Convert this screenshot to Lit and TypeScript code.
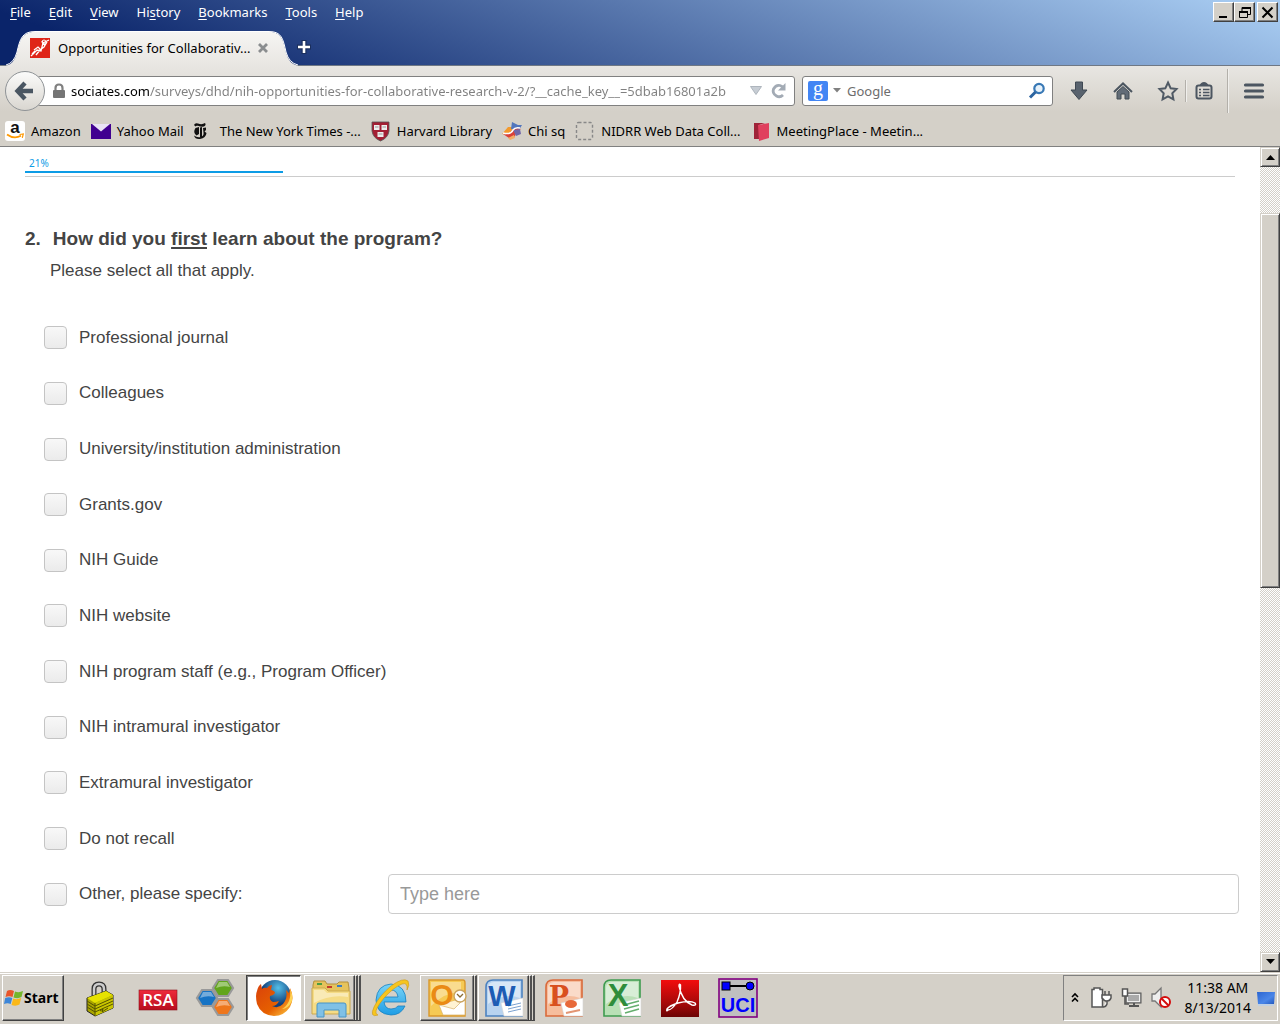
import { LitElement, html, css, svg } from "lit";
import { customElement, property } from "lit/decorators.js";

/* Icons of the bookmarks toolbar, all on a 20 x 20 grid */
const bookmarkIcons: Record<string, unknown> = {
  amazon: svg`<rect width="20" height="20" rx="3" fill="#fff"/>
    <text x="10" y="12" text-anchor="middle" font-family="Liberation Sans, sans-serif" font-weight="bold" font-size="17" fill="#111">a</text>
    <path d="M2 13.500Q9 18.500 16 14.800" fill="none" stroke="#f90" stroke-width="1.800"/><path d="M14.500 13.500L18.300 13L17.300 16.800" fill="none" stroke="#f90" stroke-width="1.200"/>`,
  yahoo: svg`<rect y="3" width="20" height="15" fill="#400090"/><path d="M1 3H19L10 10.500z" fill="#e9e2f5"/>`,
  times: svg`<path d="M3 4Q4 1.500 7 2.500Q11 4 14 2Q15.500 4 13 5.500Q10 6 7 4.800Q5 4.300 4.500 5.500zM4.500 7L8 6V13L5.500 14.500Q2.500 12 3.500 9zM9 6.500L11 6V17L9 16zM12 7L15 6.500V9L13.500 10.500L15.500 12Q15 17 9 18Q4 18.500 3 14.500Q7 17.500 10.500 15.500Q13 14.500 12.500 11.500z" fill="#111" transform="translate(-3 0)"/>`,
  harvard: svg`<path d="M1 1H18V10Q17 17 9.500 20Q2 17 1 10z" fill="#a31f34" stroke="#555" stroke-width=".8"/><path d="M3 4h5.500v5H3zM10.500 4H16v5h-5.500zM6.500 11h6v5h-6z" fill="#eee"/><path d="M4 6h3.500M11.500 6H15M7.500 13h4" stroke="#999"/>`,
  chi: svg`<path d="M0 13L6 6L12 6L8 14z" fill="#f39a2d"/><path d="M10 1L16 4L20 4L17 9L9 8z" fill="#5276bd"/><path d="M1 13Q8 14 10 9Q13 6 19 8Q14 10 13 15Q11 18 7 17z" fill="#d9413a"/><path d="M11 9L18 8L19 13L14 15z" fill="#7168a9"/><path d="M1 12Q9 14 11 9Q13 6 18 7" fill="none" stroke="#fff" stroke-width="1.500"/><path d="M6 17L12 14L13 17L8 19z" fill="#f4ad66"/>`,
  blank: svg`<rect x="1.500" y="1.500" width="16" height="17" rx="2" fill="none" stroke="#888" stroke-width="1.400" stroke-dasharray="3 2"/>`,
  meeting: svg`<path d="M3 2H14L8 4V18H3z" fill="#9f2338"/><path d="M7 4L18 2V17L8 20z" fill="#e0405e"/>`,
};

/* Shared page-and-frame backdrop of the office icons */
const sheet = (edge: string, pale: string) => svg`
  <path d="M2 9Q2 2 9 2H38V38H2z" fill="${pale}" stroke="${edge}" stroke-width="1.600"/>
  <path d="M4 10Q4 4 10 4H36V20Q20 14 4 26z" fill="#fff" opacity=".45"/>
  <path d="M17 25L39 20V38H20z" fill="#fff" stroke="#d5d5d5" stroke-width=".6"/>`;

/* Icons of the programs pinned to the taskbar, on a 40 x 40 grid */
const taskIcons: Record<string, unknown> = {
  lock: svg`<path d="M14 18V11Q14 6 19 6Q24 6 24 11V17" fill="none" stroke="#333" stroke-width="5"/><path d="M14 18V11Q14 6 19 6Q24 6 24 11V17" fill="none" stroke="#ccc" stroke-width="2.400"/>
    <path d="M7 20L26 13L33 17V30L15 38L7 33z" fill="#a9a400" stroke="#222"/><path d="M7 20L26 13L33 17L15 25z" fill="#e6e200"/><path d="M15 25L33 17V30L15 38z" fill="#c9c500"/><path d="M15 25V38M15 28L33 20M15 31L33 23M15 34L33 26M7 23L15 28M7 26L15 31M7 29L15 34M20 33L23 31L22 34L28 30" stroke="#555200" fill="none"/>`,
  rsa: svg`<defs><linearGradient id="r" x2="0" y2="1"><stop stop-color="#ee2a3b"/><stop offset="1" stop-color="#b80c1e"/></linearGradient></defs><rect x="1" y="12" width="38" height="20" fill="url(#r)" stroke="#8d1420" stroke-width=".6"/>
    <text x="20" y="28" text-anchor="middle" font-family="Open Sans, sans-serif" font-weight="600" font-size="17" fill="#fff">RSA</text>`,
  hex: svg`<g stroke="#999" stroke-width="2.200"><path d="M22 2H32L37 10L32 18H22L17 10z" fill="#62a51c"/><path d="M6 12H16L21 20L16 28H6L1 20z" fill="#1673c4"/><path d="M22 21H32L37 29L32 37H22L17 29z" fill="#ee761c"/></g>
    <path d="M23 4H31L34 9Q27 7 20 10zM7 14H15L18 19Q11 17 4 20zM23 23H31L34 28Q27 26 20 29z" fill="#fff" opacity=".4"/>`,
  firefox: svg`<defs><radialGradient id="fb" cx=".6" cy=".25"><stop stop-color="#54bfe8"/><stop offset="1" stop-color="#123f7b"/></radialGradient><linearGradient id="fo" x2="1" y2="1"><stop stop-color="#d9410b"/><stop offset=".6" stop-color="#e66000"/><stop offset="1" stop-color="#ffd24a"/></linearGradient></defs>
    <circle cx="21" cy="18" r="16" fill="url(#fb)"/><path d="M3 13Q4 8 7 6L8 11Q10 9 13 10Q15 7 18 7L17 12Q21 13 21 15Q19 18 16 18Q15 22 19 24Q22 24 25 23Q23 28 18 28Q24 31 29 26Q34 20 32 12L35 15L36 10Q41 20 36 29Q30 38 20 38Q7 37 3 26Q1 17 3 13z" fill="url(#fo)"/><path d="M36 11Q38 25 28 31Q34 31 38 23Q39 16 36 11z" fill="#ffd454"/>`,
  explorer: svg`<path d="M3 7L4 3H15L17 6H27L29 4H38L39 10V35H3z" fill="#e6c35c" stroke="#b4903b"/><path d="M7 5H12V7H7z" fill="#4a9c42"/><path d="M17 8H22V10H17z" fill="#c43c2c"/><path d="M27 7H32V9H27z" fill="#397bc2"/><path d="M2 10H15L18 13H40V36H2z" fill="#f5dc86" stroke="#cba94e"/><path d="M4 12H14L17 15H38V19Q20 16 4 25z" fill="#fff" opacity=".4"/><path d="M7 39V27Q7 25 9 25H34Q36 25 36 27V39H29V32H14V39z" fill="#7fc0e6" stroke="#4994c5"/>`,
  ie: svg`<defs><linearGradient id="ie" x2="0" y2="1"><stop stop-color="#7ad4f7"/><stop offset="1" stop-color="#1e9de5"/></linearGradient></defs><path d="M36 24H14Q15 31 21 31Q26 31 28 28H35Q31 37 21 37Q6 36 6 22Q7 7 21 6Q36 7 36 24zM14 19H28Q27 12 21 12Q15 12 14 19z" fill="url(#ie)" stroke="#1780c0" stroke-width=".8"/><path d="M8 37Q-1 40 4 29Q9 18 21 8Q33-1 38 3Q40 7 37 12Q38 4 32 6Q24 9 14 20Q5 31 6 35Q6 36 8 37z" fill="#f7c51e" stroke="#c9981b" stroke-width=".6"/>`,
  outlook: svg`<path d="M2 2H36Q38 2 38 5V38H2z" fill="#f6ca55" stroke="#d9982b" stroke-width="1.400"/><path d="M4 4H34V14Q18 14 4 28z" fill="#fff" opacity=".35"/><path d="M12 27L38 20V37H16z" fill="#fff" stroke="#d9b26a" stroke-width=".7"/><path d="M12 27L27 31L38 20" fill="#fff3d3" stroke="#d9b26a" stroke-width=".7"/><text x="15" y="27" text-anchor="middle" font-family="Liberation Sans, sans-serif" font-weight="bold" font-size="30" fill="#ea8b15">O</text><circle cx="33" cy="18" r="6" fill="#fff" stroke="#c9a35f" stroke-width="1.400"/><path d="M30 16L33 19L36 16" fill="none" stroke="#8a6a32" stroke-width="1.300"/>`,
  word: svg`${sheet("#4c82c0", "#b8d3ef")}<path d="M24 28L37 25M24 31L37 28M24 34L37 31" stroke="#7ca2cf"/><text x="18" y="28" text-anchor="middle" font-family="Liberation Sans, sans-serif" font-weight="bold" font-size="29" fill="#1d5cb4">W</text>`,
  ppt: svg`${sheet("#d9693a", "#f6bd9d")}<ellipse cx="27" cy="26" rx="6" ry="4" fill="#e8693a"/><path d="M22 35L36 32" stroke="#e39573" stroke-width="2"/><text x="15" y="28" text-anchor="middle" font-family="DejaVu Serif, serif" font-weight="bold" font-size="27" fill="#d9501e">P</text>`,
  excel: svg`${sheet("#3e9b4f", "#b9e0b6")}<path d="M22 27L37 23M22 31L37 27M23 35L37 31" stroke="#65ae6e" stroke-width="1.600"/><text x="16" y="28" text-anchor="middle" font-family="Liberation Sans, sans-serif" font-weight="bold" font-size="31" fill="#2f8d3b">X</text>`,
  acrobat: svg`<defs><linearGradient id="ac" x2="0" y2="1"><stop stop-color="#f20d0d"/><stop offset=".7" stop-color="#9c0808"/><stop offset="1" stop-color="#6a0404"/></linearGradient></defs><rect x="1" y="2" width="38" height="37" fill="url(#ac)"/><path d="M8 32Q6 34 7 31Q9 28 18 25Q30 22 35 25Q37 28 32 27Q22 23 19 8Q19 5 20.500 7Q21 15 17 24Q12 32 8 32z" fill="none" stroke="#fff" stroke-width="1.400"/>`,
  uci: svg`<rect x="1" y="1" width="38" height="38" fill="#c0c0c0" stroke="#800080" stroke-width="1.600"/><path d="M8 8H32" stroke="#000" stroke-width="2"/><rect x="4" y="4" width="8" height="8" fill="#00f" stroke="#000"/><circle cx="32" cy="8" r="4" fill="#00f" stroke="#000"/><text x="20" y="34" text-anchor="middle" font-family="Liberation Sans, sans-serif" font-weight="bold" font-size="20" fill="#00f">UCI</text>`,
};

@customElement("browser-chrome")
class BrowserChrome extends LitElement {
  static styles = css`
    :host { display: block; font: 13px/18px Tahoma, "Noto Sans", sans-serif; color: #000; }
    button { font: inherit; color: inherit; background: none; border: 0; padding: 0; }
    svg { display: block; flex: none; overflow: visible; }
    .title { background: linear-gradient(20deg, #0a246a 10%, #a6caf0 97%); border-bottom: 1px solid #6f7884; }
    .menubar { display: flex; justify-content: space-between; padding: 2px 2px 0 10px; height: 28px; box-sizing: border-box; }
    .menus { display: flex; gap: 18px; color: #fff; height: 20px; }
    .menus u { text-underline-offset: 2px; }
    .window { display: flex; }
    .win { width: 21px; height: 20px; background: #d4d0c8; border: 1px solid; border-color: #fff #404040 #404040 #fff; box-shadow: inset -1px -1px #808080; display: grid; place-items: center; }
    .win.close { margin-left: 2px; }
    .tabs { display: flex; align-items: center; height: 37px; padding-left: 6px; }
    .tab { position: relative; display: flex; align-items: center; width: 291px; height: 37px; box-sizing: border-box; padding: 3px 0 0 24px; }
    .tab-shape { position: absolute; left: 0; bottom: -1px; }
    .favicon, .tab-name, .tab-close { position: relative; }
    .tab-name { width: 196px; margin: 0 4px 0 8px; overflow: hidden; white-space: nowrap; text-overflow: ellipsis; }
    .tools { background: linear-gradient(#e8e6e2, #d4d0c8 46px); border-bottom: 1px solid #808080; }
    .nav { display: flex; align-items: center; height: 49px; padding: 0 15px 0 5px; }
    .back { position: relative; width: 40px; height: 40px; box-sizing: border-box; border: 1px solid #8f9396; border-radius: 50%; background: linear-gradient(#fbfbfa, #d9d6d0); display: grid; place-items: center; margin-right: -8px; flex: none; }
    .field { display: flex; align-items: center; height: 30px; box-sizing: border-box; border: 1px solid #808080; border-radius: 3px; background: #fff; min-width: 0; }
    .field input { flex: 1; min-width: 0; border: 0; padding: 0; outline: 0; font: inherit; height: 24px; background: none; }
    .url { flex: 1 1 0; padding: 0 6px 0 14px; gap: 5px; }
    .field .address { background: linear-gradient(90deg, #000 78px, #808080 78px); -webkit-background-clip: text; background-clip: text; color: transparent; }
    .address-end { display: flex; align-items: center; gap: 8px; margin-left: 3px; }
    .search { flex: 0 1 251px; margin-left: 7px; padding: 0 6px 0 5px; }
    .search input { margin-left: 6px; }
    .search input::placeholder { color: #6d6d6d; opacity: 1; }
    .engine { display: flex; align-items: center; gap: 5px; }
    .actions { display: flex; align-items: center; gap: 22px; margin-left: 15px; height: 45px; }
    .pair { display: flex; align-items: center; gap: 7px; }
    .divider { width: 1px; height: 22px; background: #b3b0aa; border-right: 1px solid #f0efec; }
    .tall { height: 44px; margin: 0 -8px 0 -9px; }
    .bookmarks { display: flex; gap: 10px; height: 31px; padding-left: 5px; align-items: center; }
    .bookmark { display: flex; align-items: center; gap: 6px; color: inherit; text-decoration: none; white-space: nowrap; }
  `;

  private menus = [["", "F", "ile"], ["", "E", "dit"], ["", "V", "iew"], ["Hi", "s", "tory"], ["", "B", "ookmarks"], ["", "T", "ools"], ["", "H", "elp"]];
  private bookmarks = [
    ["amazon", "Amazon"], ["yahoo", "Yahoo Mail"], ["times", "The New York Times -..."], ["harvard", "Harvard Library"],
    ["chi", "Chi sq"], ["blank", "NIDRR Web Data Coll..."], ["meeting", "MeetingPlace - Meetin..."],
  ];

  render() {
    return html`
      <header class="title">
        <div class="menubar">
          <nav class="menus">${this.menus.map(([a, key, b]) => html`<button>${a}<u>${key}</u>${b}</button>`)}</nav>
          <div class="window">
            <button class="win" aria-label="Minimize"><svg width="13" height="13"><path d="M2 11h8" stroke="#000" stroke-width="2"/></svg></button>
            <button class="win" aria-label="Restore"><svg width="13" height="13"><path d="M4 5V1.500H12.500V8.500H10M1.500 5.500H9.500V11.500H1.500z" fill="none" stroke="#000"/><path d="M4 2H13M1 6H10" stroke="#000" stroke-width="2"/></svg></button>
            <button class="win close" aria-label="Close"><svg width="13" height="13"><path d="M1.500 1.500L11.500 11.500M11.500 1.500L1.500 11.500" stroke="#000" stroke-width="2"/></svg></button>
          </div>
        </div>
        <div class="tabs">
          <div class="tab">
            <svg class="tab-shape" width="292" height="36"><defs><linearGradient id="t" x2="0" y2="1"><stop stop-color="#f6f5f3"/><stop offset="1" stop-color="#e8e6e2"/></linearGradient></defs><path d="M0 36Q8 34 11 23C14 10 16 2 29 2H263C276 2 277 10 280 23Q283 34 292 36z" fill="url(#t)"/><path d="M0 35Q8 33 11 22C14 9 16 1.500 29 1.500H263C276 1.500 277 9 280 22Q283 33 292 35" fill="none" stroke="#fff"/></svg>
            <svg class="favicon" width="20" height="20"><rect width="20" height="20" fill="#df2518"/><path d="M1 18L7 12L11 13L13 5L19 2M4 12L8 9L11 12M2 16L5 13M6 17L10 12L14 9L17 4M12 3L15 8" fill="none" stroke="#fff" stroke-width="1.300"/><circle cx="14" cy="4" r="2" fill="none" stroke="#fff"/></svg>
            <span class="tab-name">Opportunities for Collaborativ...</span>
            <button class="tab-close" aria-label="Close tab"><svg width="10" height="10"><path d="M1 1L9 9M9 1L1 9" stroke="#8a8d8f" stroke-width="2.800"/></svg></button>
          </div>
          <button aria-label="New tab"><svg width="14" height="14"><path d="M7 0V14M0 7H14" stroke="#1b2f5d" stroke-width="5"/><path d="M7 1V13M1 7H13" stroke="#fff" stroke-width="2.600"/></svg></button>
        </div>
      </header>
      <div class="tools">
        <div class="nav">
          <button class="back" aria-label="Back"><svg width="20" height="20"><path d="M10 2L2.500 10L10 18M3 10H18" fill="none" stroke="#4a5662" stroke-width="4.400"/></svg></button>
          <div class="field url">
            <svg width="14" height="16"><path d="M3.500 8V5Q3.500 1.500 7 1.500Q10.500 1.500 10.500 5V8" fill="none" stroke="#808080" stroke-width="2.200"/><rect x="1" y="7" width="12" height="8" rx="1" fill="#757575"/></svg>
            <input class="address" aria-label="Address" value="sociates.com/surveys/dhd/nih-opportunities-for-collaborative-research-v-2/?__cache_key__=5dbab16801a2b" />
            <div class="address-end">
              <button aria-label="Show history"><svg width="12" height="9"><path d="M.5.5H11.500L6 8.500z" fill="#c7cdd4" stroke="#aeb5bd"/></svg></button>
              <button aria-label="Reload"><svg width="18" height="18"><path d="M13 13Q10 16 6.500 14Q2 11.500 3.500 7Q6 2.500 10 3.500Q12 4 13.500 6" fill="none" stroke="#a3abb5" stroke-width="2.800"/><path d="M15.500 1V8.500H8z" fill="#a3abb5"/></svg></button>
            </div>
          </div>
          <div class="field search">
            <button class="engine" aria-label="Search engine">
              <svg width="20" height="20"><rect width="20" height="20" rx="2" fill="#4285f4"/><text x="10" y="14" text-anchor="middle" font-family="Liberation Serif, serif" font-size="20" fill="#fff">g</text></svg>
              <svg width="8" height="5"><path d="M0 0H8L4 4.500z" fill="#808080"/></svg>
            </button>
            <input aria-label="Search" placeholder="Google" />
            <button aria-label="Go"><svg width="18" height="18"><circle cx="11" cy="6.500" r="4.700" fill="#e7f2fb" stroke="#3878b5" stroke-width="2.200"/><path d="M7.500 10L2 15.500" stroke="#2c64a0" stroke-width="3"/></svg></button>
          </div>
          <div class="actions">
            <button aria-label="Downloads"><svg width="22" height="20"><path d="M7.500 1H14.500V9H19L11 18.500L3 9H7.500z" fill="#59636e" stroke="#3f4852"/></svg></button>
            <button aria-label="Home"><svg width="22" height="20"><path d="M2 11L11 2.500L20 11" fill="none" stroke="#4b555f" stroke-width="2"/><path d="M5 11L11 5.500L17 11V18H13V13H9V18H5z" fill="#626c77" stroke="#434c55"/></svg></button>
            <div class="pair">
              <button aria-label="Bookmark this page"><svg width="22" height="20"><path d="M12 1.500L14.700 7.300L20.500 8L16.300 12.300L17.400 18.300L12 15.300L6.600 18.300L7.700 12.300L3.500 8L9.300 7.300z" fill="none" stroke="#505a65" stroke-width="2"/></svg></button>
              <span class="divider"></span>
              <button aria-label="Show bookmarks"><svg width="20" height="20"><rect x="2.500" y="4.500" width="15" height="13" rx="2" fill="none" stroke="#4c5661" stroke-width="2"/><path d="M5 5Q7 1 10 1Q13 1 15 5z" fill="#4c5661"/><path d="M5 8.500H7M9 8.500H15.500M5 11.500H7M9 11.500H15.500M5 14.500H7M9 14.500H15.500" stroke="#4c5661" stroke-width="1.400"/></svg></button>
            </div>
            <span class="divider tall"></span>
            <button aria-label="Menu"><svg width="22" height="20"><path d="M2.500 4H19.500M2.500 10H19.500M2.500 16H19.500" stroke="#4c5661" stroke-width="3.200" stroke-linecap="round"/></svg></button>
          </div>
        </div>
        <nav class="bookmarks">
          ${this.bookmarks.map(([icon, name]) => html`<a class="bookmark" href="#"><svg width="20" height="20" viewBox="0 0 20 20">${bookmarkIcons[icon]}</svg>${name}</a>`)}
        </nav>
      </div>`;
  }
}

@customElement("survey-question")
class SurveyQuestion extends LitElement {
  @property({ type: Number }) progress = 21;

  static styles = css`
    :host { display: flex; flex-direction: column; flex: 1; box-sizing: border-box; background: #fff; color: #444; padding: 8px 21px 50px 25px; font: 17px/24px "Liberation Sans", Arial, sans-serif; }
    .progress { border-bottom: 1px solid #ccc; margin-right: 4px; padding-bottom: 3px; }
    .bar { border-bottom: 2px solid #0d9ce6; padding-left: 4px; color: #0d9ce6; font: 10px/16px "Noto Sans", sans-serif; }
    .question { display: flex; gap: 12px; margin: 50px 0 0; font-size: 19px; line-height: 24px; font-weight: bold; }
    .question u { text-underline-offset: 2px; text-decoration-thickness: 2px; text-decoration-skip-ink: none; }
    .hint { margin: 8px 0 27px 25px; line-height: 24px; }
    .options { flex: 1; display: grid; grid-auto-rows: minmax(40px, 1fr); margin: 0; padding: 0 0 0 19px; list-style: none; }
    .option { display: grid; grid-template-columns: 344px 1fr; align-items: center; }
    .option label { display: flex; align-items: center; gap: 12px; white-space: nowrap; }
    .tick { appearance: none; flex: none; width: 23px; height: 23px; margin: 0; border: 1px solid #c4c4c4; border-radius: 4px; background: linear-gradient(#f8f8f8, #ebebeb); }
    .tick:checked { background: #0d9ce6; }
    .other { width: 100%; height: 40px; box-sizing: border-box; border: 1px solid #ccc; border-radius: 4px; padding: 0 11px; font: 18px/24px "Liberation Sans", Arial, sans-serif; color: #444; }
    .other::placeholder { color: #999; opacity: 1; }
  `;

  private options = [
    "Professional journal", "Colleagues", "University/institution administration", "Grants.gov", "NIH Guide", "NIH website",
    "NIH program staff (e.g., Program Officer)", "NIH intramural investigator", "Extramural investigator", "Do not recall", "Other, please specify:",
  ];

  render() {
    const last = this.options.length - 1;
    return html`
      <div class="progress" role="progressbar" aria-valuenow=${this.progress}><div class="bar" style="width: ${this.progress}%">${this.progress}%</div></div>
      <h2 class="question" id="question"><span>2.</span><span>How did you <u>first</u> learn about the program?</span></h2>
      <p class="hint">Please select all that apply.</p>
      <ul class="options" aria-labelledby="question">
        ${this.options.map((text, i) => html`<li class="option">
          <label for="option-${i}"><input class="tick" type="checkbox" id="option-${i}" />${text}</label>
          ${i === last ? html`<input class="other" type="text" placeholder="Type here" aria-label="Other, please specify" />` : ""}
        </li>`)}
      </ul>`;
  }
}

@customElement("scroll-rail")
class ScrollRail extends LitElement {
  static styles = css`
    :host { display: flex; flex-direction: column; width: 20px; background: repeating-conic-gradient(#fff 0 25%, #d4d0c8 0 50%) 0 0 / 2px 2px; }
    .step, .thumb { box-sizing: border-box; background: #d4d0c8; border: 1px solid; border-color: #d4d0c8 #404040 #404040 #d4d0c8; box-shadow: inset 1px 1px #fff, inset -1px -1px #808080; }
    .step { height: 20px; padding: 0; display: grid; place-items: center; }
    .before { flex: 46; }
    .thumb { flex: 374; }
    .after { flex: 365; }
  `;
  render() {
    return html`
      <button class="step" aria-label="Scroll up"><svg width="9" height="5"><path d="M0 5h9L4.500 0z" fill="#000"/></svg></button>
      <span class="before"></span><span class="thumb"></span><span class="after"></span>
      <button class="step" aria-label="Scroll down"><svg width="9" height="5"><path d="M0 0h9L4.500 5z" fill="#000"/></svg></button>`;
  }
}

@customElement("task-bar")
class TaskBar extends LitElement {
  static styles = css`
    :host { display: flex; align-items: center; height: 49px; padding: 0 2px; background: #d4d0c8; border-top: 1px solid #d4d0c8; box-shadow: inset 0 1px #fff; border-bottom: 2px solid #d4d0c8; font: 14px/20px Tahoma, "Noto Sans", sans-serif; color: #000; }
    button { font: inherit; color: inherit; background: none; border: 0; padding: 0; }
    svg { display: block; flex: none; overflow: visible; }
    .start { display: flex; align-items: center; width: 62px; height: 46px; padding: 0 1px; box-sizing: border-box; font-weight: bold; border: 1px solid; border-color: #fff #404040 #404040 #fff; box-shadow: inset -1px -1px #808080; background: #d4d0c8; }
    .tasks { display: flex; flex: 1; margin-left: 7px; }
    .slot { width: 58px; height: 46px; display: flex; }
    .task { flex: 1; height: 46px; display: grid; place-items: center; box-sizing: border-box; border: 1px solid transparent; margin: 0 2px 0 1px; }
    .open .task { border-color: #fff #404040 #404040 #fff; box-shadow: inset -1px -1px #808080; margin-right: 0; }
    .active .task { background: #fff; border-color: #404040 #fff #fff #404040; box-shadow: inset 1px 1px #808080; }
    .leaf { width: 3px; box-sizing: border-box; border-top: 1px solid #fff; border-right: 2px solid #505050; border-bottom: 1px solid #404040; }
    .tray { display: flex; align-items: center; height: 46px; box-sizing: border-box; border: 1px solid; border-color: #808080 #fff #fff #808080; padding: 0 0 0 7px; gap: 8px; }
    .more { margin-right: 3px; }
    .clock { text-align: center; margin: 0 -4px 0 5px; }
  `;

  private tasks: [string, string, string, number][] = [
    ["lock", "Lock", "", 0], ["rsa", "RSA SecurID", "", 0], ["hex", "Network client", "", 0], ["firefox", "Firefox", "active", 0],
    ["explorer", "File explorer", "open", 2], ["ie", "Internet Explorer", "", 0], ["outlook", "Outlook", "open", 1], ["word", "Word", "open", 2],
    ["ppt", "PowerPoint", "", 0], ["excel", "Excel", "", 0], ["acrobat", "Acrobat", "", 0], ["uci", "UCI", "", 0],
  ];

  render() {
    return html`
      <button class="start"><svg width="20" height="20"><path d="M3 3Q6 1 10 3L8.500 9Q5 7.500 1.500 9z" fill="#e8552b"/><path d="M11 3.500Q15 5 19 3L17.500 9Q14 11 9.500 9.500z" fill="#74b62c"/><path d="M1.200 10Q5 8.500 8.300 10L6.700 16Q3.500 14.500 0 16z" fill="#3d86d8"/><path d="M9.200 10.500Q13 12 17.200 10L15.500 16.500Q12 18.500 7.500 17z" fill="#fbb818"/></svg>Start</button>
      <nav class="tasks">
        ${this.tasks.map(([icon, name, state, leaves]) => html`<div class="slot ${state}">
          <button class="task" aria-label=${name}><svg width="40" height="40" viewBox="0 0 40 40">${taskIcons[icon]}</svg></button>
          ${Array.from({ length: leaves }, () => html`<span class="leaf"></span>`)}
        </div>`)}
      </nav>
      <div class="tray">
        <button class="more" aria-label="Show hidden icons"><svg width="8" height="10"><path d="M1 4L4 1L7 4M1 8.500L4 5.500L7 8.500" fill="none" stroke="#000" stroke-width="1.600"/></svg></button>
        <svg width="22" height="22"><path d="M4 2.500V1H10V2.500H12.500V20H2V2.500z" fill="#fff" stroke="#555" stroke-width="1.500"/><path d="M15 4V8M19 4V8M12 8H21V11Q20 14 17 14Q14 14 12 11zM17 14V17Q16 20 13 20" fill="#fff" stroke="#555" stroke-width="1.500"/></svg>
        <svg width="22" height="22"><rect x="6" y="6" width="15" height="10" fill="#aaa" stroke="#555"/><rect x="7.500" y="7.500" width="12" height="7" fill="none" stroke="#eee"/><path d="M9 19H19M14 16V19" stroke="#555" stroke-width="2"/><path d="M5 9V17H9" fill="none" stroke="#555" stroke-width="1.600"/><path d="M2.500 2H7.500V9H2.500z" fill="#fff" stroke="#555" stroke-width="1.500"/></svg>
        <svg width="22" height="22"><path d="M2 7H5L11 1V20L5 14H2z" fill="#eee" stroke="#777" stroke-width="1.300"/><circle cx="15" cy="15" r="5" fill="#fff" stroke="#d40d0d" stroke-width="2"/><path d="M11.500 11.500L18.500 18.500" stroke="#d40d0d" stroke-width="2"/></svg>
        <div class="clock">11:38 AM<br />8/13/2014</div>
        <svg width="22" height="18"><defs><linearGradient id="m" x2="1" y2="1"><stop stop-color="#2b65d1"/><stop offset=".6" stop-color="#4a86e8"/><stop offset="1" stop-color="#2157bd"/></linearGradient></defs><path d="M2 3H20L19 15H3z" fill="url(#m)"/><path d="M3 16H19" stroke="#b8d0ee" stroke-width="1.400"/></svg>
      </div>`;
  }
}

@customElement("app-root")
class AppRoot extends LitElement {
  static styles = css`
    :host { display: flex; flex-direction: column; min-height: 100vh; background: #fff; }
    .page { flex: 1; display: flex; }
  `;
  render() {
    return html`
      <browser-chrome></browser-chrome>
      <main class="page"><survey-question></survey-question><scroll-rail></scroll-rail></main>
      <task-bar></task-bar>`;
  }
}
